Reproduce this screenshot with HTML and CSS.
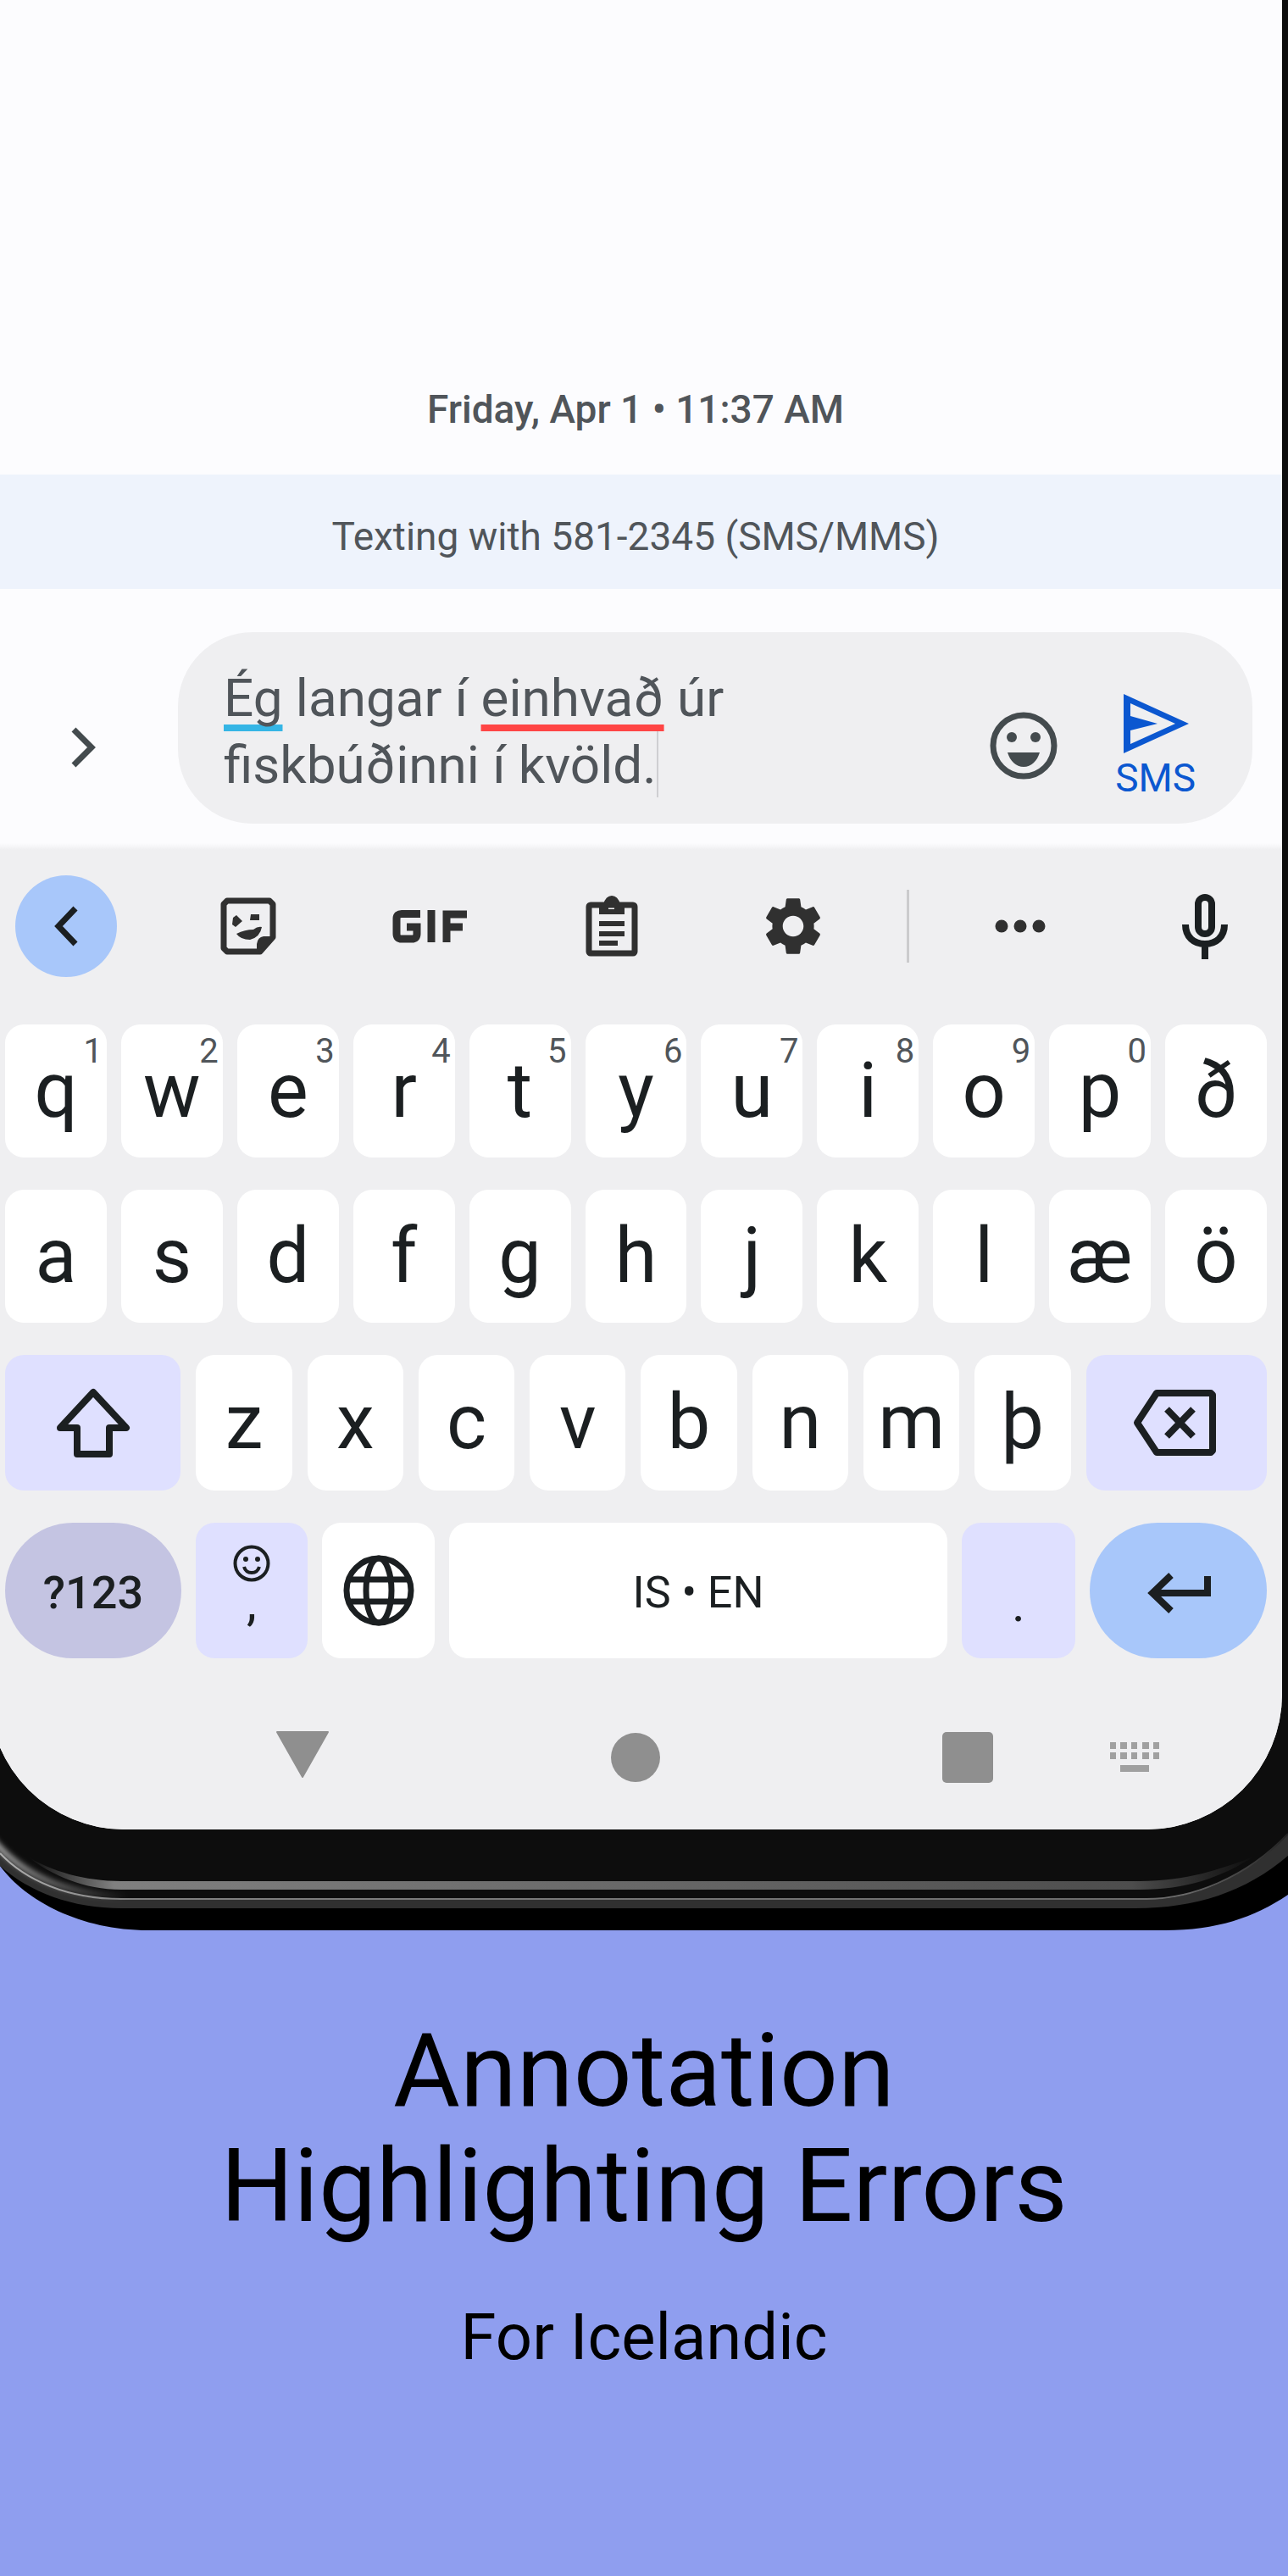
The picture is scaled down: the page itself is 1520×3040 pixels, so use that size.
FILE: index.html
```html
<!DOCTYPE html>
<html lang="en">
<head>
<meta charset="utf-8">
<meta name="viewport" content="width=device-width, initial-scale=1">
<title>Annotation Highlighting Errors</title>
<link rel="stylesheet" href="styles.css">
</head>
<body>
<section class="phone">
  <svg class="bezel" viewBox="0 0 1520 240" preserveAspectRatio="none" aria-hidden="true">
    <defs>
      <linearGradient id="shine" x1="0" x2="1" y1="0" y2="0">
        <stop offset="0" stop-color="#0d0d0d"/>
        <stop offset=".07" stop-color="#808080"/>
        <stop offset=".5" stop-color="#686868"/>
        <stop offset=".9" stop-color="#4d4d4d"/>
        <stop offset="1" stop-color="#0d0d0d"/>
      </linearGradient>
      <linearGradient id="edge" x1="0" x2="1" y1="0" y2="0">
        <stop offset="0" stop-color="#b0b0b0"/>
        <stop offset=".1" stop-color="#808080"/>
        <stop offset=".92" stop-color="#6a6a6a"/>
        <stop offset="1" stop-color="#222"/>
      </linearGradient>
      <linearGradient id="glow" gradientUnits="userSpaceOnUse" x1="0" x2="150" y1="0" y2="0">
        <stop offset="0" stop-color="#aaa"/>
        <stop offset="1" stop-color="#aaa" stop-opacity="0"/>
      </linearGradient>
      <filter id="soft" x="-10%" y="-20%" width="120%" height="140%"><feGaussianBlur stdDeviation="3"/></filter>
    </defs>
    <path fill="#000" d="M0 0V164C30 205 95 240 175 240H1375C1435 240 1480 225 1520 198V0Z"/>
    <path fill="#303030" d="M0 0V164C35 195 85 214 143 214H1340C1410 214 1470 195 1520 152V0Z"/>
    <path fill="#0d0d0d" d="M0 0V150C30 182 80 204 143 204H1353C1405 204 1470 180 1520 127V0Z"/>
    <path fill="none" stroke="url(#glow)" stroke-width="7" filter="url(#soft)" d="M-10 132C25 174 75 198 150 200"/>
    <path fill="none" stroke="url(#edge)" stroke-width="2" d="M0 149C30 181 80 203 143 203H1353C1405 203 1470 179 1520 126"/>
    <path fill="url(#shine)" d="M33 153C60 170 100 182 143 182H1345C1400 182 1440 168 1480 153C1440 178 1400 192 1345 192H143C100 192 60 175 33 153Z"/>
  </svg>
  <main class="screen">
    <header class="date">Friday, Apr 1 • 11:37 AM</header>
    <p class="banner">Texting with 581-2345 (SMS/MMS)</p>
    <div class="compose">
      <button class="expand" aria-label="More options"><svg width="32" height="50" viewBox="0 0 32 50"><path d="M4 4L25 25L4 46" fill="none" stroke="#444b4e" stroke-width="7"/></svg></button>
      <div class="bubble">
        <div class="message" role="textbox" aria-multiline="true" aria-label="Message" contenteditable="true" spellcheck="false" lang="is"><span class="grammar">Ég</span> langar í <span class="spelling">einhvað</span> úr<br>fiskbúðinni í kvöld.<span class="caret"></span></div>
        <button class="emoji" aria-label="Emoji"><svg width="80" height="80" viewBox="0 0 80 80"><circle cx="40" cy="40" r="36" fill="none" stroke="#444b4e" stroke-width="7"/><circle cx="26" cy="30" r="6" fill="#444b4e"/><circle cx="54" cy="30" r="6" fill="#444b4e"/><path d="M21 48H59C56 58 49 65 40 65S24 58 21 48Z" fill="#444b4e"/></svg></button>
        <button class="send"><svg width="78" height="72" viewBox="0 0 78 72" aria-hidden="true"><path fill="#0b57d0" fill-rule="evenodd" d="M1 1L78 36L1 71ZM9 12V27L41 36L9 44V60L62 36Z"/></svg><span>SMS</span></button>
      </div>
    </div>
    <div class="keyboard">
      <div class="toolbar">
        <div class="tools">
          <button class="tool back" aria-label="Back"><svg width="32" height="48" viewBox="0 0 32 48"><path d="M27 3L7 24L27 45" fill="none" stroke="#1b1f21" stroke-width="7"/></svg></button>
          <button class="tool" aria-label="Stickers"><svg width="66" height="68" viewBox="0 0 66 68"><path d="M8 4H58L62 8V47L47 64H8L4 60V8Z" fill="none" stroke="#303030" stroke-width="7" stroke-linejoin="round"/><path d="M43 65V55Q44 47 51 46H64Z" fill="#303030"/><path d="M15 24L19 21L26 28L18 35L14 32ZM36 20H46V27H35ZM19 43Q29 38 39 38Q44 34 49 35Q47 47 35 50Q24 50 19 43Z" fill="#303030"/></svg></button>
          <button class="tool" aria-label="GIF"><svg width="90" height="42" viewBox="0 0 90 42"><path d="M34 6.500H12Q6 6.500 6 12V30Q6 36 12 36H24Q30 36 30 30V22H18M47 2V40M65 40V7H89M66 22H84" fill="none" stroke="#303030" stroke-width="9"/></svg></button>
          <button class="tool" aria-label="Clipboard"><svg width="62" height="72" viewBox="0 0 62 72"><rect x="4" y="11" width="54" height="57" rx="2" fill="none" stroke="#303030" stroke-width="7"/><path fill="#303030" fill-rule="evenodd" d="M16 22V10H21Q24 0 31 0T41 10H46V22ZM27 8V16H34V8ZM16 30H46V36H16ZM16 42H46V48H16ZM16 53H38V59H16Z"/></svg></button>
          <button class="tool" aria-label="Settings"><svg width="82" height="82" viewBox="0 0 24 24"><path fill="#303030" d="M19.140 12.940c.04-.3.060-.61.060-.94 0-.32-.02-.64-.07-.94l2.030-1.580c.18-.14.23-.41.120-.61l-1.920-3.320c-.12-.22-.37-.29-.59-.22l-2.390.960c-.5-.38-1.030-.7-1.620-.94l-.36-2.540c-.04-.24-.24-.41-.48-.41h-3.840c-.24 0-.43.170-.47.410l-.36 2.540c-.59.240-1.130.570-1.620.940l-2.390-.96c-.22-.08-.47 0-.59.220L2.740 8.870c-.12.210-.08.470.120.610l2.030 1.580c-.05.300-.09.630-.09.940s.02.640.070.940l-2.030 1.580c-.18.140-.23.410-.12.610l1.920 3.320c.12.220.37.290.59.220l2.390-.96c.5.380 1.030.700 1.620.940l.36 2.540c.05.240.24.410.48.410h3.840c.24 0 .44-.17.470-.41l.36-2.540c.59-.24 1.130-.56 1.620-.94l2.390.960c.22.080.47 0 .59-.22l1.920-3.320c.12-.22.070-.47-.12-.61l-2.010-1.580zM12 15.600c-1.980 0-3.600-1.620-3.600-3.600s1.620-3.600 3.600-3.600 3.600 1.620 3.600 3.600-1.620 3.600-3.600 3.600z"/></svg></button>
        </div>
        <span class="divider"></span>
        <div class="tools extra">
          <button class="tool" aria-label="More"><svg width="60" height="16" viewBox="0 0 60 16" fill="#303030"><circle cx="8" cy="8" r="7.500"/><circle cx="30" cy="8" r="7.500"/><circle cx="52" cy="8" r="7.500"/></svg></button>
          <button class="tool" aria-label="Voice input"><svg width="54" height="78" viewBox="0 0 54 78" fill="none" stroke="#1b1f21" stroke-width="8"><rect x="19" y="5" width="16" height="43" rx="8"/><path d="M4 37C4 52 14 60 27 60S50 52 50 37M27 60V78"/></svg></button>
        </div>
      </div>
      <div class="row letters">
        <button class="key">q<sup>1</sup></button><button class="key">w<sup>2</sup></button><button class="key">e<sup>3</sup></button><button class="key">r<sup>4</sup></button><button class="key">t<sup>5</sup></button><button class="key">y<sup>6</sup></button><button class="key">u<sup>7</sup></button><button class="key">i<sup>8</sup></button><button class="key">o<sup>9</sup></button><button class="key">p<sup>0</sup></button><button class="key">ð</button>
      </div>
      <div class="row letters">
        <button class="key">a</button><button class="key">s</button><button class="key">d</button><button class="key">f</button><button class="key">g</button><button class="key">h</button><button class="key">j</button><button class="key">k</button><button class="key">l</button><button class="key">æ</button><button class="key">ö</button>
      </div>
      <div class="row lower">
        <button class="key soft" aria-label="Shift"><svg width="88" height="84" viewBox="0 0 88 84"><path d="M44 6L83 48H63V79H25V48H5Z" fill="none" stroke="#1b1f21" stroke-width="8" stroke-linejoin="round"/></svg></button><button class="key">z</button><button class="key">x</button><button class="key">c</button><button class="key">v</button><button class="key">b</button><button class="key">n</button><button class="key">m</button><button class="key">þ</button><button class="key soft erase" aria-label="Backspace"><svg width="98" height="80" viewBox="0 0 98 80"><path d="M28 5H92L94 7V73L92 75H28L5 40Z" fill="none" stroke="#1b1f21" stroke-width="8" stroke-linejoin="round"/><path d="M40 24L71 56M71 24L40 56" stroke="#1b1f21" stroke-width="8"/></svg></button>
      </div>
      <div class="row bottom">
        <button class="key symbols">?123</button>
        <button class="key soft punct"><svg width="44" height="44" viewBox="0 0 44 44" aria-hidden="true"><circle cx="22" cy="22" r="19.500" fill="none" stroke="#1b1f21" stroke-width="4"/><path d="M13 26Q15 33 22 33T31 26" fill="none" stroke="#1b1f21" stroke-width="4"/><circle cx="15" cy="17" r="3" fill="#1b1f21"/><circle cx="29" cy="17" r="3" fill="#1b1f21"/></svg><span>,</span></button>
        <button class="key" aria-label="Language"><svg width="84" height="84" viewBox="0 0 84 84" fill="none" stroke="#1b1f21" stroke-width="7"><circle cx="42" cy="42" r="38"/><ellipse cx="42" cy="42" rx="15" ry="38"/><path d="M7 29H77M7 55H77"/></svg></button>
        <button class="key space">IS • EN</button>
        <button class="key soft punct dot"><span>.</span></button>
        <button class="key enter" aria-label="Enter"><svg width="76" height="48" viewBox="0 0 76 48" fill="none" stroke="#1b1f21" stroke-width="8"><path d="M72 4V24H8M29 3L7 24L29 45"/></svg></button>
      </div>
      <nav class="system">
        <div class="mainnav">
          <button aria-label="Back"><svg width="64" height="62" viewBox="0 0 64 62"><path d="M2 1H62L32 54Z" fill="#8f8f8f" stroke="#8f8f8f" stroke-width="2" stroke-linejoin="round"/></svg></button>
          <button aria-label="Home"><svg width="58" height="58" viewBox="0 0 58 58"><circle cx="29" cy="29" r="29" fill="#8f8f8f"/></svg></button>
          <button aria-label="Recents"><svg width="60" height="60" viewBox="0 0 60 60"><rect width="60" height="60" rx="5" fill="#8f8f8f"/></svg></button>
        </div>
        <button class="switch" aria-label="Switch keyboard"><svg width="58" height="36" viewBox="0 0 58 36" fill="#a0a0a0"><path d="M0 0H7V8H0ZM12 0H20V8H12ZM25 0H32V8H25ZM38 0H46V8H38ZM51 0H58V8H51ZM0 12H7V20H0ZM12 12H20V20H12ZM25 12H32V20H25ZM38 12H46V20H38ZM51 12H58V20H51ZM12 27H46V35H12Z"/></svg></button>
      </nav>
    </div>
  </main>
</section>
<section class="caption">
  <h1>Annotation<br>Highlighting Errors</h1>
  <p>For Icelandic</p>
</section>
</body>
</html>
```
FILE: styles.css
```css
* { box-sizing: border-box; }
body {
  margin: 0;
  min-height: 100vh;
  background: #8f9eef;
  color: #000;
  font-family: Roboto, "Liberation Sans", sans-serif;
  overflow-x: hidden;
}
button {
  border: 0;
  padding: 0;
  margin: 0;
  background: none;
  color: inherit;
  font: inherit;
  display: flex;
  align-items: center;
  justify-content: center;
}
svg { display: block; flex: none; }

.phone {
  position: relative;
  padding: 0 7px 119px 0;
  overflow: hidden;
  background: linear-gradient(#0d0d0d, #0d0d0d) top / 100% calc(100% - 240px) no-repeat;
}
.bezel {
  position: absolute;
  left: 0;
  bottom: 0;
  width: 100%;
  height: 240px;
}
.screen {
  position: relative;
  margin-left: -13px;
  background: #fcfcfe;
  border-radius: 0 0 160px 160px;
  overflow: hidden;
}
.date {
  padding: 453px 0 47px;
  font-size: 46px;
  font-weight: 500;
  line-height: 60px;
  text-align: center;
  color: #50555a;
}
.banner {
  margin: 0;
  padding: 43px 0 32px;
  background: #eef3fc;
  font-size: 46px;
  line-height: 60px;
  text-align: center;
  color: #50555a;
}
.compose {
  display: flex;
  align-items: flex-end;
  padding: 51px 35px 31px 13px;
  background: linear-gradient(#fcfcfe, #efeff1) bottom / 100% 8px no-repeat;
}
.expand { width: 210px; height: 180px; padding-right: 12px; }
.bubble {
  flex: 1;
  display: flex;
  align-items: flex-end;
  padding: 38px 67px 30px 54px;
  border-radius: 88px;
  background: #efeff1;
}
.message {
  flex: 1;
  font-size: 62px;
  line-height: 79px;
  color: #50555a;
  outline: 0;
}
.grammar, .spelling {
  text-decoration: underline 8px;
  text-underline-offset: 10px;
  text-decoration-skip-ink: none;
}
.grammar { text-decoration-color: #35b5e5; }
.spelling { text-decoration-color: #ff4545; }
.caret {
  display: inline-block;
  width: 2px;
  height: 78px;
  vertical-align: top;
  background: #cfcfd2;
}
.emoji { margin: 0 68px 22px 0; }
.send {
  flex-direction: column;
  gap: 4px;
  font-size: 46px;
  line-height: 48px;
  color: #0b57d0;
}

.keyboard {
  display: flex;
  flex-direction: column;
  gap: 38px;
  padding: 30px 18px 55px 19px;
  background: #efeff1;
  color: #1b1f21;
}
.toolbar {
  display: flex;
  align-items: center;
  padding: 0 13px 0 12px;
  margin-bottom: 18px;
}
.tools { display: flex; justify-content: space-between; flex: 979; }
.extra { flex: 338; }
.tool { width: 120px; height: 120px; }
.back { border-radius: 50%; background: #a8c7fa; }
.divider { width: 3px; height: 86px; margin: 0 71px 0 74px; background: #cbcbcd; }

.row { display: grid; gap: 18px; grid-auto-rows: 160px; }
.letters { gap: 17px; grid-auto-rows: 157px; grid-template-columns: repeat(11, 1fr); }
.lower { grid-template-columns: 207fr repeat(8, 113fr) 213fr; }
.bottom { gap: 17px; grid-template-columns: 208fr 132fr 133fr 588fr 134fr 209fr; }
.key {
  position: relative;
  min-width: 0;
  border-radius: 22px;
  background: #fff;
  font-size: 90px;
  line-height: 90px;
}
.key sup {
  position: absolute;
  top: 12px;
  right: 5px;
  font-size: 40px;
  line-height: 40px;
  color: #50555a;
}
.soft { background: #dfe0ff; }
.erase { padding-right: 4px; }
.symbols, .enter { border-radius: 80px; }
.symbols, .enter, .space { padding-top: 6px; }
.symbols { background: #c4c4e2; font-size: 54px; font-weight: 500; }
.enter { background: #a8c7fa; }
.space { font-size: 52px; }
.punct {
  flex-direction: column;
  justify-content: flex-start;
  padding-top: 26px;
  font-size: 60px;
  line-height: 48px;
}
.dot { justify-content: flex-end; padding: 0 0 40px; }

.system {
  display: flex;
  align-items: center;
  padding: 0 96px 0 291px;
  margin-top: 49px;
}
.mainnav { flex: 1; display: flex; align-items: center; justify-content: space-between; }
.system button { width: 120px; height: 60px; }
.system .switch { margin-left: 77px; }

.caption { text-align: center; padding: 98px 40px 200px; }
.caption h1 { margin: 0; font-size: 121px; line-height: 136px; font-weight: 400; }
.caption p { margin: 62px 0 0; font-size: 76px; line-height: 96px; }
```
